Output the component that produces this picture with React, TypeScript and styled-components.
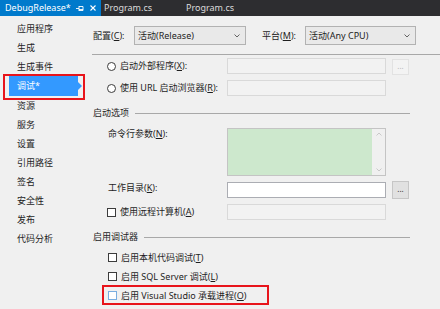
import React from 'react';
import styled, { createGlobalStyle } from 'styled-components';

const GlobalStyle = createGlobalStyle`
    html, body {
        margin: 0;
        padding: 0;
        background: #f0f0f0;
    }
    body {
        font-family: "Noto Sans", "Noto Sans CJK SC", sans-serif;
        font-size: 9px;
        line-height: 12px;
        color: #1e1e1e;
        text-autospace: no-autospace;
    }
`;

const Page = styled.div`
    width: 440px;
    height: 309px;
    overflow: hidden;
    background: #f0f0f0;
`;

const TabBar = styled.div`
    display: flex;
    height: 16px;
    background: #2d2d30;
    font-family: "Noto Sans", sans-serif;
    font-size: 9px;
`;

const Tab = styled.div<{ $active?: boolean; $width: number }>`
    display: flex;
    align-items: center;
    width: ${p => p.$width}px;
    padding-left: ${p => (p.$active ? 5 : 3)}px;
    box-sizing: border-box;
    background: ${p => (p.$active ? '#007acc' : 'transparent')};
    color: ${p => (p.$active ? '#ffffff' : '#dcdcdc')};
    white-space: nowrap;
`;

const TabIcons = styled.span`
    display: flex;
    align-items: center;
    gap: 6px;
    margin-left: auto;
    margin-right: 5px;
`;

const Body = styled.div`
    display: flex;
`;

const Nav = styled.nav`
    width: 92px;
    flex: none;
    padding-top: 3px;
    display: flex;
    flex-direction: column;
`;

const NavItem = styled.div<{ $selected?: boolean }>`
    position: relative;
    height: 19px;
    line-height: 19px;
    padding-left: ${p => (p.$selected ? 8 : 17)}px;
    margin: ${p => (p.$selected ? '0 14px 0 9px' : '0')};
    background: ${p => (p.$selected ? '#3399ff' : 'transparent')};
    color: ${p => (p.$selected ? '#ffffff' : '#1e1e1e')};
    ${p => p.$selected && `
        height: 20px;
        line-height: 20px;
        &::before {
            content: "";
            position: absolute;
            right: -4px;
            top: 6px;
            border-left: 4px solid #3399ff;
            border-top: 4px solid transparent;
            border-bottom: 4px solid transparent;
        }
        &::after {
            content: "";
            position: absolute;
            left: -6px;
            right: -7px;
            top: -2px;
            bottom: -4px;
            border: 2px solid #e8141b;
        }
    `}
`;

const Main = styled.main`
    flex: 1;
    display: flex;
    flex-direction: column;
`;

const ConfigRow = styled.div`
    display: flex;
    align-items: center;
    height: 19px;
    margin-top: 10px;
    padding-left: 1px;
`;

const FieldLabel = styled.span<{ $width: number }>`
    width: ${p => p.$width}px;
    flex: none;
    white-space: nowrap;
`;

const Select = styled.div<{ $width: number; $gap?: number }>`
    display: flex;
    align-items: center;
    justify-content: space-between;
    width: ${p => p.$width}px;
    height: 19px;
    box-sizing: border-box;
    margin-right: ${p => p.$gap ?? 0}px;
    padding: 0 5px 0 3px;
    background: #e9e9e9;
    border: 1px solid #b2b2b2;
`;

const Separator = styled.div`
    height: 1px;
    margin-top: 9px;
    background: #a8a8a8;
`;

const FormGrid = styled.div<{ $top: number }>`
    display: grid;
    grid-template-columns: 120px 159px auto;
    row-gap: 6px;
    align-items: center;
    margin: ${p => p.$top}px 0 0 15px;
`;

const Input = styled.div<{ $disabled?: boolean }>`
    height: 16px;
    box-sizing: border-box;
    background: ${p => (p.$disabled ? '#f2f2f2' : '#ffffff')};
    border: 1px solid ${p => (p.$disabled ? '#d9d9d9' : '#abadb3')};
`;

const TextArea = styled.div`
    display: flex;
    height: 48px;
    box-sizing: border-box;
    border: 1px solid #c4c4c4;
    background: #cde8cd;
`;

const ScrollBar = styled.div`
    margin-left: auto;
    width: 13px;
    background: #f0f0f0;
    display: flex;
    flex-direction: column;
    justify-content: space-between;
    align-items: center;
    padding: 3px 0;
`;

const BrowseButton = styled.div<{ $disabled?: boolean }>`
    width: 17px;
    height: ${p => (p.$disabled ? 16 : 18)}px;
    margin: ${p => (p.$disabled ? '1px 0 -1px 6px' : '-1px 0 -1px 6px')};
    box-sizing: border-box;
    display: flex;
    align-items: center;
    justify-content: center;
    padding-bottom: 3px;
    font-family: "Noto Sans", sans-serif;
    font-size: 8px;
    background: ${p => (p.$disabled ? '#f3f3f3' : '#e1e1e1')};
    border: 1px solid ${p => (p.$disabled ? '#e2e2e2' : '#c6c6c6')};
    color: ${p => (p.$disabled ? '#b8b8b8' : '#333')};
`;

const Choice = styled.label`
    display: flex;
    align-items: center;
    gap: 4px;
    white-space: nowrap;
`;

const Radio = styled.span`
    width: 9px;
    height: 9px;
    box-sizing: border-box;
    border-radius: 50%;
    border: 1px solid #3c3c3c;
    background: #ffffff;
`;

const Check = styled.span<{ $focus?: boolean }>`
    width: 9px;
    height: 9px;
    flex: none;
    box-sizing: border-box;
    border: 1px solid ${p => (p.$focus ? '#7aaee0' : '#3c3c3c')};
    background: #ffffff;
`;

const PlainLabel = styled.span`
    padding: 0 0 0 1px;
    align-self: start;
`;

const SectionHeader = styled.div<{ $top: number }>`
    display: flex;
    align-items: center;
    gap: 6px;
    width: 317px;
    height: 12px;
    margin-top: ${p => p.$top}px;
    padding-left: 1px;
    &::after {
        content: "";
        flex: 1;
        height: 1px;
        background: #a8a8a8;
    }
`;

const CheckList = styled.div`
    display: flex;
    flex-direction: column;
    margin: 5px 0 0 16px;
`;

const CheckRow = styled.div<{ $marked?: boolean }>`
    position: relative;
    height: 19px;
    display: flex;
    align-items: center;
    width: 160px;
    ${p => p.$marked && `
        &::after {
            content: "";
            position: absolute;
            left: -6px;
            top: -1px;
            width: 167px;
            height: 20px;
            box-sizing: border-box;
            border: 2px solid #e8141b;
        }
    `}
`;

const Ul = styled.u`
    text-decoration: underline;
`;

const Chevron = ({ up, color = '#555' }: { up?: boolean; color?: string }) => (
    <svg width="6" height="4" viewBox="0 0 6 4">
        <path d={up ? 'M0.5 3.5 L3 1 L5.5 3.5' : 'M0.5 0.5 L3 3 L5.5 0.5'} stroke={color} fill="none" strokeWidth="0.9" />
    </svg>
);

const Pin = () => (
    <svg width="8" height="7" viewBox="0 0 8 7">
        <path d="M0 3.5 H3 M3 1 V6 M3 1.5 H7 V5.5 H3 M3 4.5 H7" stroke="#fff" fill="none" strokeWidth="0.9" />
    </svg>
);

const Close = () => (
    <svg width="6" height="6" viewBox="0 0 6 6">
        <path d="M0.5 0.5 L5.5 5.5 M5.5 0.5 L0.5 5.5" stroke="#fff" strokeWidth="1.1" />
    </svg>
);

const navItems = ['应用程序', '生成', '生成事件', '调试*', '资源', '服务', '设置', '引用路径', '签名', '安全性', '发布', '代码分析'];

export default function App() {
    return (
        <Page>
            <GlobalStyle />
            <TabBar>
                <Tab $active $width={101}>
                    DebugRelease*
                    <TabIcons><Pin /><Close /></TabIcons>
                </Tab>
                <Tab $width={82}>Program.cs</Tab>
                <Tab $width={80}>Program.cs</Tab>
            </TabBar>
            <Body>
                <Nav>
                    {navItems.map(item => (
                        <NavItem key={item} $selected={item === '调试*'}>{item}</NavItem>
                    ))}
                </Nav>
                <Main>
                    <ConfigRow>
                        <FieldLabel $width={41}>配置(<Ul>C</Ul>):</FieldLabel>
                        <Select $width={112} $gap={16}>活动(Release)<Chevron /></Select>
                        <FieldLabel $width={43}>平台(<Ul>M</Ul>):</FieldLabel>
                        <Select $width={111}>活动(Any CPU)<Chevron /></Select>
                    </ConfigRow>
                    <Separator />

                    <FormGrid $top={3}>
                        <Choice><Radio /><span>启动外部程序(<Ul>X</Ul>):</span></Choice>
                        <Input $disabled />
                        <BrowseButton $disabled>...</BrowseButton>
                        <Choice><Radio /><span>使用 URL 启动浏览器(<Ul>R</Ul>):</span></Choice>
                        <Input $disabled />
                        <span />
                    </FormGrid>

                    <SectionHeader $top={11}>启动选项</SectionHeader>

                    <FormGrid $top={9}>
                        <PlainLabel>命令行参数(<Ul>N</Ul>):</PlainLabel>
                        <TextArea>
                            <ScrollBar>
                                <Chevron up color="#c4c4c4" />
                                <Chevron color="#c4c4c4" />
                            </ScrollBar>
                        </TextArea>
                        <span />
                        <PlainLabel>工作目录(<Ul>K</Ul>):</PlainLabel>
                        <Input />
                        <BrowseButton>...</BrowseButton>
                        <Choice><Check /><span>使用远程计算机(<Ul>A</Ul>)</span></Choice>
                        <Input $disabled />
                        <span />
                    </FormGrid>

                    <SectionHeader $top={11}>启用调试器</SectionHeader>

                    <CheckList>
                        <CheckRow><Choice><Check /><span>启用本机代码调试(<Ul>T</Ul>)</span></Choice></CheckRow>
                        <CheckRow><Choice><Check /><span>启用 SQL Server 调试(<Ul>L</Ul>)</span></Choice></CheckRow>
                        <CheckRow $marked><Choice><Check $focus /><span>启用 Visual Studio 承载进程(<Ul>O</Ul>)</span></Choice></CheckRow>
                    </CheckList>
                </Main>
            </Body>
        </Page>
    );
}
